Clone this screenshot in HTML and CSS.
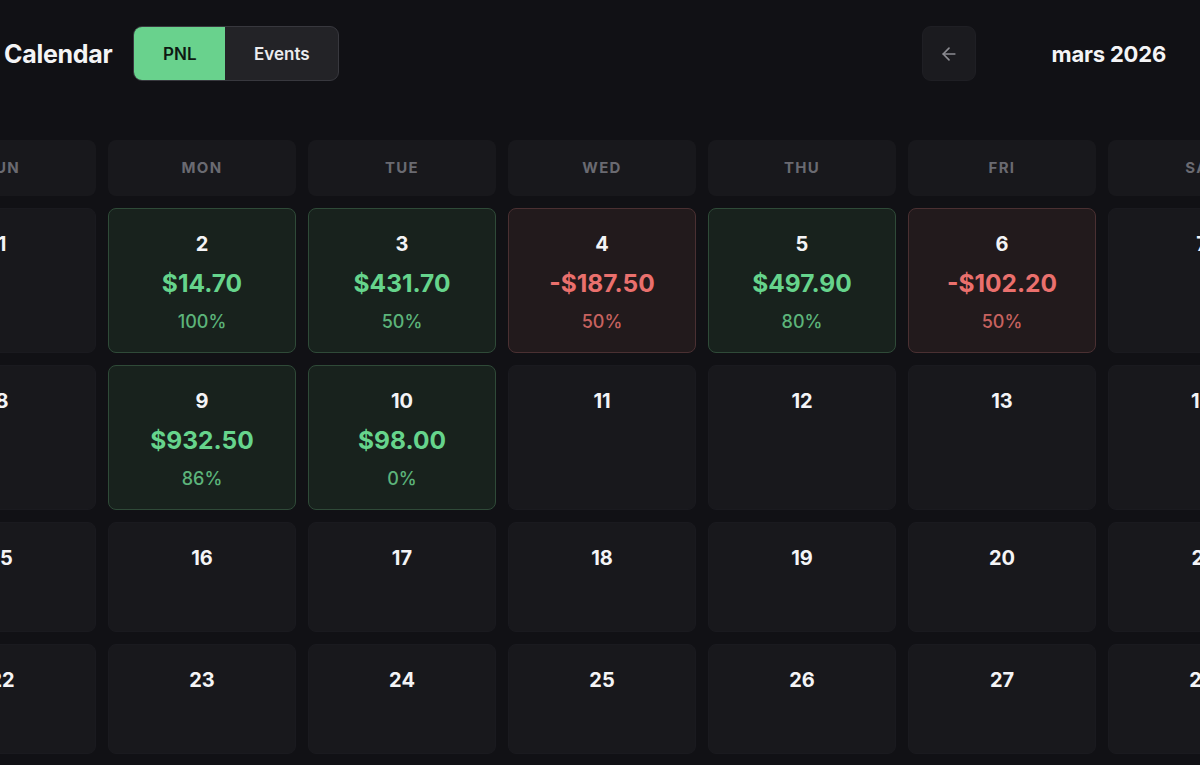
FILE: index.html
```html
<!DOCTYPE html>
<html lang="fr">
<head>
<meta charset="utf-8">
<title>Calendar</title>
<link rel="stylesheet" href="styles.css">
</head>
<body>
<div class="page">
  <header class="topbar">
    <div class="left">
      <h1 class="title">Calendar</h1>
      <div class="toggle">
        <button class="seg seg-active">PNL</button>
        <button class="seg">Events</button>
      </div>
    </div>
    <div class="nav">
      <button class="navbtn" aria-label="Previous month">
        <svg width="20" height="20" viewBox="0 0 24 24" fill="none" stroke="currentColor" stroke-width="2" stroke-linecap="round" stroke-linejoin="round"><path d="M19 12H5"/><path d="M12 19l-7-7 7-7"/></svg>
      </button>
      <div class="month">mars 2026</div>
      <button class="navbtn" aria-label="Next month">
        <svg width="20" height="20" viewBox="0 0 24 24" fill="none" stroke="currentColor" stroke-width="2" stroke-linecap="round" stroke-linejoin="round"><path d="M5 12h14"/><path d="M12 5l7 7-7 7"/></svg>
      </button>
    </div>
  </header>

  <div class="grid">
    <div class="dow">SUN</div>
    <div class="dow">MON</div>
    <div class="dow">TUE</div>
    <div class="dow">WED</div>
    <div class="dow">THU</div>
    <div class="dow">FRI</div>
    <div class="dow">SAT</div>

    <div class="day"><div class="num">1</div></div>
    <div class="day win"><div class="num">2</div><div class="amt">$14.70</div><div class="pct">100%</div></div>
    <div class="day win"><div class="num">3</div><div class="amt">$431.70</div><div class="pct">50%</div></div>
    <div class="day loss"><div class="num">4</div><div class="amt">-$187.50</div><div class="pct">50%</div></div>
    <div class="day win"><div class="num">5</div><div class="amt">$497.90</div><div class="pct">80%</div></div>
    <div class="day loss"><div class="num">6</div><div class="amt">-$102.20</div><div class="pct">50%</div></div>
    <div class="day"><div class="num">7</div></div>

    <div class="day"><div class="num">8</div></div>
    <div class="day win"><div class="num">9</div><div class="amt">$932.50</div><div class="pct">86%</div></div>
    <div class="day win"><div class="num">10</div><div class="amt">$98.00</div><div class="pct">0%</div></div>
    <div class="day"><div class="num">11</div></div>
    <div class="day"><div class="num">12</div></div>
    <div class="day"><div class="num">13</div></div>
    <div class="day"><div class="num">14</div></div>

    <div class="day"><div class="num">15</div></div>
    <div class="day"><div class="num">16</div></div>
    <div class="day"><div class="num">17</div></div>
    <div class="day"><div class="num">18</div></div>
    <div class="day"><div class="num">19</div></div>
    <div class="day"><div class="num">20</div></div>
    <div class="day"><div class="num">21</div></div>

    <div class="day"><div class="num">22</div></div>
    <div class="day"><div class="num">23</div></div>
    <div class="day"><div class="num">24</div></div>
    <div class="day"><div class="num">25</div></div>
    <div class="day"><div class="num">26</div></div>
    <div class="day"><div class="num">27</div></div>
    <div class="day"><div class="num">28</div></div>
  </div>
</div>
</body>
</html>
```

FILE: styles.css
```css
* { box-sizing: border-box; }

html, body {
  margin: 0;
  padding: 0;
  background: #111115;
  overflow: hidden;
  width: 1200px;
  height: 765px;
}

body {
  font-family: Inter, "Noto Sans", "Liberation Sans", sans-serif;
  color: #f2f2f4;
}

.page {
  width: 1388px;
  margin-left: -92px;
  padding-top: 26px;
}

.topbar {
  display: flex;
  justify-content: space-between;
  align-items: center;
  height: 55px;
}

.left {
  display: flex;
  align-items: center;
  padding-left: 96px;
}

.title {
  margin: 0;
  font-size: 25px;
  font-weight: 700;
  letter-spacing: -0.3px;
  color: #f4f4f6;
  margin-right: 21px;
}

.toggle {
  display: flex;
  height: 55px;
  border: 1px solid #38383e;
  border-radius: 9px;
  overflow: hidden;
  background: #232327;
}

.seg {
  border: 0;
  margin: 0;
  font-family: inherit;
  font-size: 17px;
  font-weight: 600;
  background: transparent;
  color: #ececee;
  padding: 0;
  width: 113px;
}

.seg-active {
  background: #69d28d;
  color: #0d1a12;
  width: 91px;
}

.nav {
  display: flex;
  align-items: center;
  gap: 76px;
}

.navbtn {
  width: 54px;
  height: 55px;
  border: 1px solid #1f1f24;
  border-radius: 9px;
  background: #1b1b1f;
  color: #8c8c92;
  display: flex;
  align-items: center;
  justify-content: center;
  padding: 0;
}

.month {
  font-size: 22px;
  font-weight: 700;
  color: #f4f4f6;
  letter-spacing: -0.2px;
}

.grid {
  margin-top: 59px;
  display: grid;
  grid-template-columns: repeat(7, 188px);
  grid-auto-rows: minmax(110px, auto);
  grid-template-rows: 56px;
  gap: 12px;
}

.dow {
  background: #18181c;
  border-radius: 8px;
  display: flex;
  align-items: center;
  justify-content: center;
  padding-bottom: 1px;
  font-size: 15px;
  font-weight: 700;
  letter-spacing: 1.3px;
  color: #6a6a71;
}

.day {
  background: #18181c;
  border: 1px solid #1a1a1f;
  border-radius: 8px;
  display: flex;
  flex-direction: column;
  align-items: center;
  padding: 22px 0 19px;
}

.num {
  font-size: 20px;
  font-weight: 700;
  line-height: 26px;
  color: #f4f4f6;
}

.amt {
  font-size: 24.5px;
  font-weight: 700;
  line-height: 30px;
  margin-top: 11px;
}

.pct {
  font-size: 18px;
  font-weight: 500;
  line-height: 22px;
  margin-top: 13px;
}

.win {
  background: #18221d;
  border-color: #2f4a38;
}
.win .amt { color: #66d48c; }
.win .pct { color: #5cb47a; }

.loss {
  background: #221a1c;
  border-color: #4a3032;
}
.loss .amt { color: #ea706d; }
.loss .pct { color: #c7625f; }
```
